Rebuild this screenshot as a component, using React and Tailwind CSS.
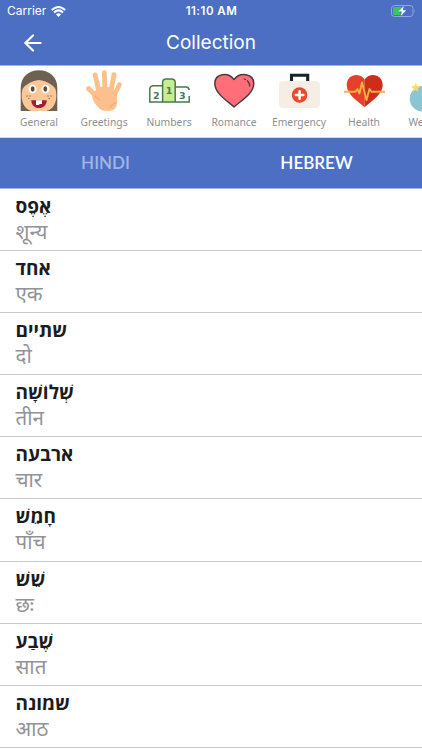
import { ArrowLeft } from 'lucide-react'

const heart = 'M21 37 C16 32 1.8 24 1.8 13.5 C1.8 3.5 15 1.5 21 9.5 C27 1.5 40.8 3.5 40.8 13.5 C40.8 24 26 32 21 37 Z'

function GeneralIcon() {
  return (
    <svg width="42" height="42" viewBox="0 0 42 42">
      <path d="M2.7 41 V18 C2.7 7 10.5 .3 21 .3 S39.3 7 39.3 18 V41 Z" fill="#6f6152" />
      <path d="M21 10 C29 11 35 15 37.5 19 C40.5 31 35 41 27 41 H15 C7 41 1.5 31 4.5 19 C7 15 13 11 21 10 Z" fill="#fdc797" />
      <ellipse cx="14.5" cy="19" rx="4" ry="4.3" fill="#fff" />
      <ellipse cx="27.5" cy="19" rx="4" ry="4.3" fill="#fff" />
      <ellipse cx="14.7" cy="19" rx="1.9" ry="2.7" fill="#594b40" />
      <ellipse cx="27.3" cy="19" rx="1.9" ry="2.7" fill="#594b40" />
      <g fill="#a8703f">
        <circle cx="9" cy="26" r=".8" /><circle cx="12" cy="26" r=".8" /><circle cx="10.8" cy="28.5" r=".8" />
        <circle cx="30" cy="26" r=".8" /><circle cx="33" cy="26" r=".8" /><circle cx="31.2" cy="28.5" r=".8" />
      </g>
      <path d="M13.2 30.2 H28.8 C28.5 35 25.6 38 21 38 S13.5 35 13.2 30.2 Z" fill="#a51c36" />
      <path d="M18 30.2 H24 V34 H21.3 V35 H18 Z" fill="#fff" />
    </svg>
  )
}

function GreetingsIcon() {
  return (
    <svg width="42" height="42" viewBox="0 0 42 42">
      <g stroke="#fdc08c" strokeLinecap="round" fill="none">
        <path d="M16 22 L12.2 5" strokeWidth="4.9" />
        <path d="M22 20 L21.3 2.8" strokeWidth="4.9" />
        <path d="M28 21 L31 4.8" strokeWidth="4.9" />
        <path d="M31 26 L36.5 14.5" strokeWidth="4.7" />
        <path d="M16 29 L5.5 18.5" strokeWidth="4.9" />
      </g>
      <path d="M14 18 Q23 14 31 20 L34 23 C33 30 36 35 31 39.5 Q25 42.5 17.5 39.5 C14 36 10 32 9 26 Z" fill="#fdc08c" />
      <path d="M12 26 L17 30 M27 38 Q29 34 33 32.5" stroke="#f0a26c" strokeWidth="1" strokeLinecap="round" fill="none" />
    </svg>
  )
}

function NumbersIcon() {
  return (
    <svg width="42" height="42" viewBox="0 0 42 42">
      <g stroke="#477a50" strokeWidth="1.5" fill="none">
        <path d="M14.5 15.7 H5 Q1.8 16 1.8 19 V32 H14.5" />
        <path d="M27.5 17 H38 Q41 17.2 41.2 20 M41.2 26 V32 H27.5" />
        <path d="M14.6 32 V12.5 Q14.8 9 18 9 H23.6 Q27 9 27.2 12.5 V32 Z" fill="#c7ed91" />
      </g>
      <g fill="#477a50" fontFamily="DejaVu Sans, sans-serif" fontWeight="700" fontSize="9.5" textAnchor="middle">
        <text x="8.3" y="28.8">2</text>
        <text x="21" y="23.8">1</text>
        <text x="34.3" y="28.8">3</text>
      </g>
    </svg>
  )
}

function RomanceIcon() {
  return (
    <svg width="42" height="42" viewBox="0 0 42 42">
      <path d={heart} fill="#ff6e79" stroke="#4b3b40" strokeWidth="1.5" strokeLinejoin="round" />
      <path d="M31.2 9 L32.4 9.5 M34.3 10.8 Q36.7 12.8 36.8 16" stroke="#4b3b40" strokeWidth="1.3" strokeLinecap="round" fill="none" />
    </svg>
  )
}

function EmergencyIcon() {
  return (
    <svg width="42" height="42" viewBox="0 0 42 42">
      <path d="M13.5 12 V5.2 H29.7 V12" stroke="#142429" strokeWidth="3.1" fill="none" />
      <rect x="1" y="11" width="41" height="27" rx="4" fill="#f6eee5" />
      <circle cx="21.6" cy="25" r="7.8" fill="#e64b2d" />
      <path d="M21.6 21.2 V28.8 M17.8 25 H25.4" stroke="#fff" strokeWidth="2.5" strokeLinecap="round" />
    </svg>
  )
}

function HealthIcon() {
  return (
    <svg width="42" height="42" viewBox="0 0 42 42">
      <path d="M21.7 37.3 C16 32 3.7 25 3.7 15 C3.7 4.5 16 1.5 21.7 9.5 Z" fill="#e6402a" />
      <path d="M21.7 37.3 C27 32 39.7 25 39.7 15 C39.7 4.5 27 1.5 21.7 9.5 Z" fill="#cd2e1b" />
      <path d="M1 21.7 H12.5 L14.5 19 L16.5 23.5 L19 12.5 L23.5 30 L26.5 19 L28.5 21.7 H42" stroke="#f9ae45" strokeWidth="1.9" fill="none" strokeLinejoin="round" />
    </svg>
  )
}

function WeatherIcon() {
  return (
    <svg width="42" height="42" viewBox="0 0 42 42">
      <circle cx="14.5" cy="28.8" r="12.8" fill="#8cc5d2" />
      <path d="M7.7 13 L9.1 16 L12.3 16.4 L9.9 18.5 L10.5 21.6 L7.7 20.1 L4.9 21.6 L5.5 18.5 L3.1 16.4 L6.3 16 Z" fill="#fbdc68" />
    </svg>
  )
}

const categories = [
  { name: 'General', Icon: GeneralIcon },
  { name: 'Greetings', Icon: GreetingsIcon },
  { name: 'Numbers', Icon: NumbersIcon },
  { name: 'Romance', Icon: RomanceIcon },
  { name: 'Emergency', Icon: EmergencyIcon },
  { name: 'Health', Icon: HealthIcon },
  { name: 'Weather', Icon: WeatherIcon }
]

const phrases = [
  { hebrew: 'אֶפֶס', hindi: 'शून्य' },
  { hebrew: 'אחד', hindi: 'एक' },
  { hebrew: 'שתיים', hindi: 'दो' },
  { hebrew: 'שְׁלוֹשָׁה', hindi: 'तीन' },
  { hebrew: 'ארבעה', hindi: 'चार' },
  { hebrew: 'חָמֵשׁ', hindi: 'पाँच' },
  { hebrew: 'שֵׁשׁ', hindi: 'छः' },
  { hebrew: 'שֶׁבַע', hindi: 'सात' },
  { hebrew: 'שמונה', hindi: 'आठ' }
]

function StatusBar() {
  return (
    <div className="grid h-[22px] grid-cols-3 items-center pl-[7px] pr-[6px] text-white">
      <div className="flex items-center gap-[5px]">
        <span className="text-[12px]">Carrier</span>
        <svg width="15" height="11" viewBox="0 0 15 11">
          <path d="M.8 4 Q7.5 -2 14.2 4 M3 6.4 Q7.5 2.4 12 6.4" stroke="white" strokeWidth="2" fill="none" />
          <path d="M7.5 11 L4.9 8.3 Q7.5 6.3 10.1 8.3 Z" fill="white" />
        </svg>
      </div>
      <span className="pt-px text-center text-[11.5px] font-semibold tracking-[0.5px]">11:10 AM</span>
      <svg className="justify-self-end" width="25" height="12" viewBox="0 0 25 12">
        <rect x=".5" y=".5" width="21.5" height="11" rx="3" fill="none" stroke="#93a7dc" />
        <path d="M3.5 2 H11 L8 6.5 L10 10 H3.5 Q2 10 2 8.5 V3.5 Q2 2 3.5 2 Z" fill="#39c75b" />
        <path d="M23.3 4 Q24.6 6 23.3 8 Z" fill="#93a7dc" />
        <path d="M12.8 1 L7.5 6.6 H10.8 L9.8 11 L15.2 5.2 H11.8 Z" fill="white" />
      </svg>
    </div>
  )
}

export default function App() {
  return (
    <div className="flex h-[750px] w-[422px] flex-col overflow-hidden bg-white font-['Inter',sans-serif]">
      <header className="h-[66px] shrink-0 border-b border-[#a6b5df] bg-[#4c6fc3]">
        <StatusBar />
        <div className="grid h-[41px] grid-cols-[64px_1fr_64px] items-center text-white">
          <ArrowLeft className="ml-[20px]" size={26} strokeWidth={2} />
          <h1 className="pt-[2px] text-center text-[19px] font-normal">Collection</h1>
        </div>
      </header>

      <nav className="flex h-[72px] shrink-0 overflow-hidden border-b border-[#cfd8ee] pl-[6.5px] pt-[4px]">
        {categories.map(({ name, Icon }) => (
          <div key={name} className="flex w-[65px] shrink-0 flex-col items-center">
            <Icon />
            <span className="mt-[2px] font-['Noto_Sans',sans-serif] text-[10.3px] leading-[16px] text-[#8e8e93]">{name}</span>
          </div>
        ))}
      </nav>

      <div className="grid h-[51px] shrink-0 grid-cols-2 items-center border-b border-[#a6b5df] bg-[#4c6fc3] pb-px text-center font-['Lato',sans-serif] text-[17px] font-semibold">
        <span className="text-[#a3b4e4]">HINDI</span>
        <span className="text-white">HEBREW</span>
      </div>

      <ul className="flex flex-col">
        {phrases.map(p => (
          <li key={p.hindi} className="flex h-[62.1px] shrink-0 flex-col items-start border-b border-[#c8c8cb] pl-[15.5px] pt-[4px]">
            <span className="font-['Open_Sans',sans-serif] text-[19px] font-bold leading-[26px] text-[#1c1c1e]">{p.hebrew}</span>
            <span className="font-['Noto_Sans',sans-serif] text-[20.5px] leading-[25px] text-[#929297]">{p.hindi}</span>
          </li>
        ))}
      </ul>
    </div>
  )
}
